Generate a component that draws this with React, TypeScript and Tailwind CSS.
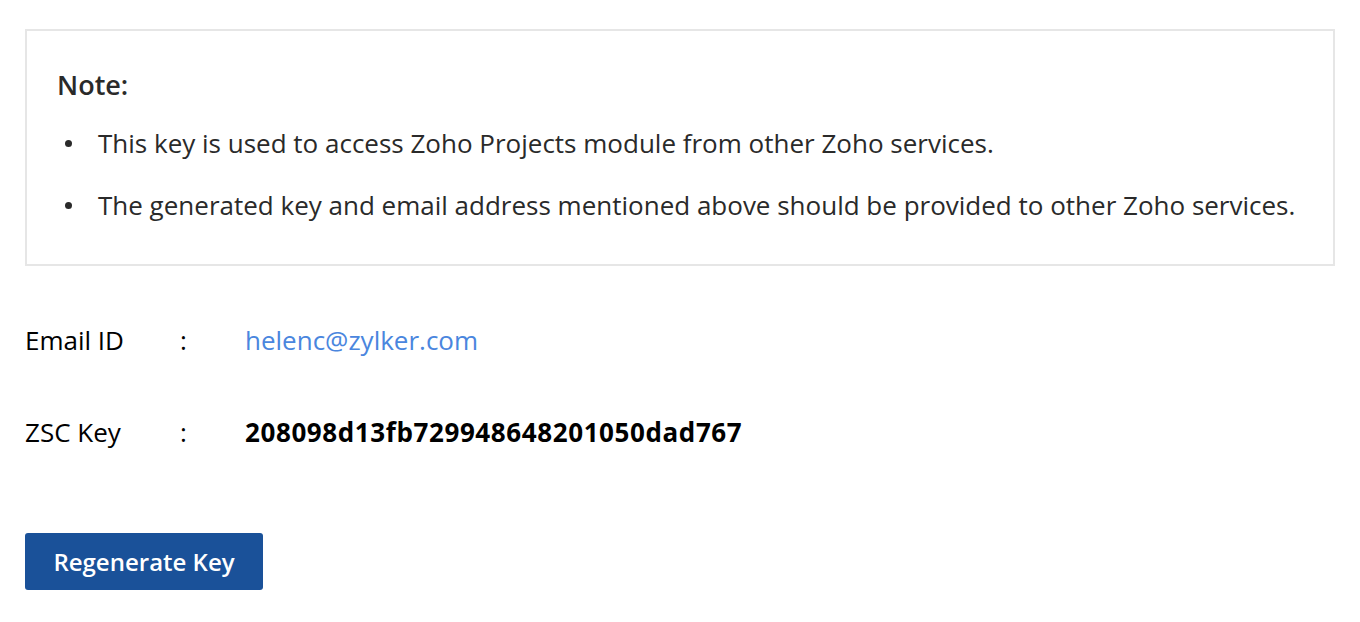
import React from "react";

const rows = [
    { label: "Email ID", value: "helenc@zylker.com", link: true },
    { label: "ZSC Key", value: "208098d13fb729948648201050dad767", link: false },
];

export default function App() {
    return (
        <div className="min-h-[622px] bg-white px-[25px] pt-[29px] text-[#1f1f1f]" style={{ fontFamily: '"Open Sans", "Liberation Sans", sans-serif' }}>
            <div className="border-2 border-[#e6e6e6] px-[30px] pt-[36px] pb-[41px]">
                <div className="text-[27px] font-semibold leading-[36px] text-[#2a2a2a]">Note:</div>
                <ul className="mt-[22px] flex flex-col gap-[26px] pl-[8px]">
                    <li className="flex items-center text-[26px] leading-[36px] text-[#2a2a2a]">
                        <span className="mr-[26px] inline-block h-[7px] w-[7px] shrink-0 rounded-full bg-[#2a2a2a]"></span>
                        This key is used to access Zoho Projects module from other Zoho services.
                    </li>
                    <li className="flex items-center text-[26px] leading-[36px] text-[#2a2a2a]">
                        <span className="mr-[26px] inline-block h-[7px] w-[7px] shrink-0 rounded-full bg-[#2a2a2a]"></span>
                        The generated key and email address mentioned above should be provided to other Zoho services.
                    </li>
                </ul>
            </div>
            <div className="mt-[56px] flex flex-col gap-[56px]">
                {rows.map(row => <div key={row.label} className="flex items-center text-[26px] leading-[36px]">
                    <span className="w-[155px] text-black">{row.label}</span>
                    <span className="w-[65px] text-black">:</span>
                    <span className={row.link ? "text-[#4a86de]" : "font-bold tracking-[0.6px] text-black"}>{row.value}</span>
                </div>)}
            </div>
            <button type="button" className="mt-[83px] h-[57px] w-[238px] rounded-[3px] bg-[#1a5199] text-[24px] font-semibold text-white">Regenerate Key</button>
        </div>
    );
}
